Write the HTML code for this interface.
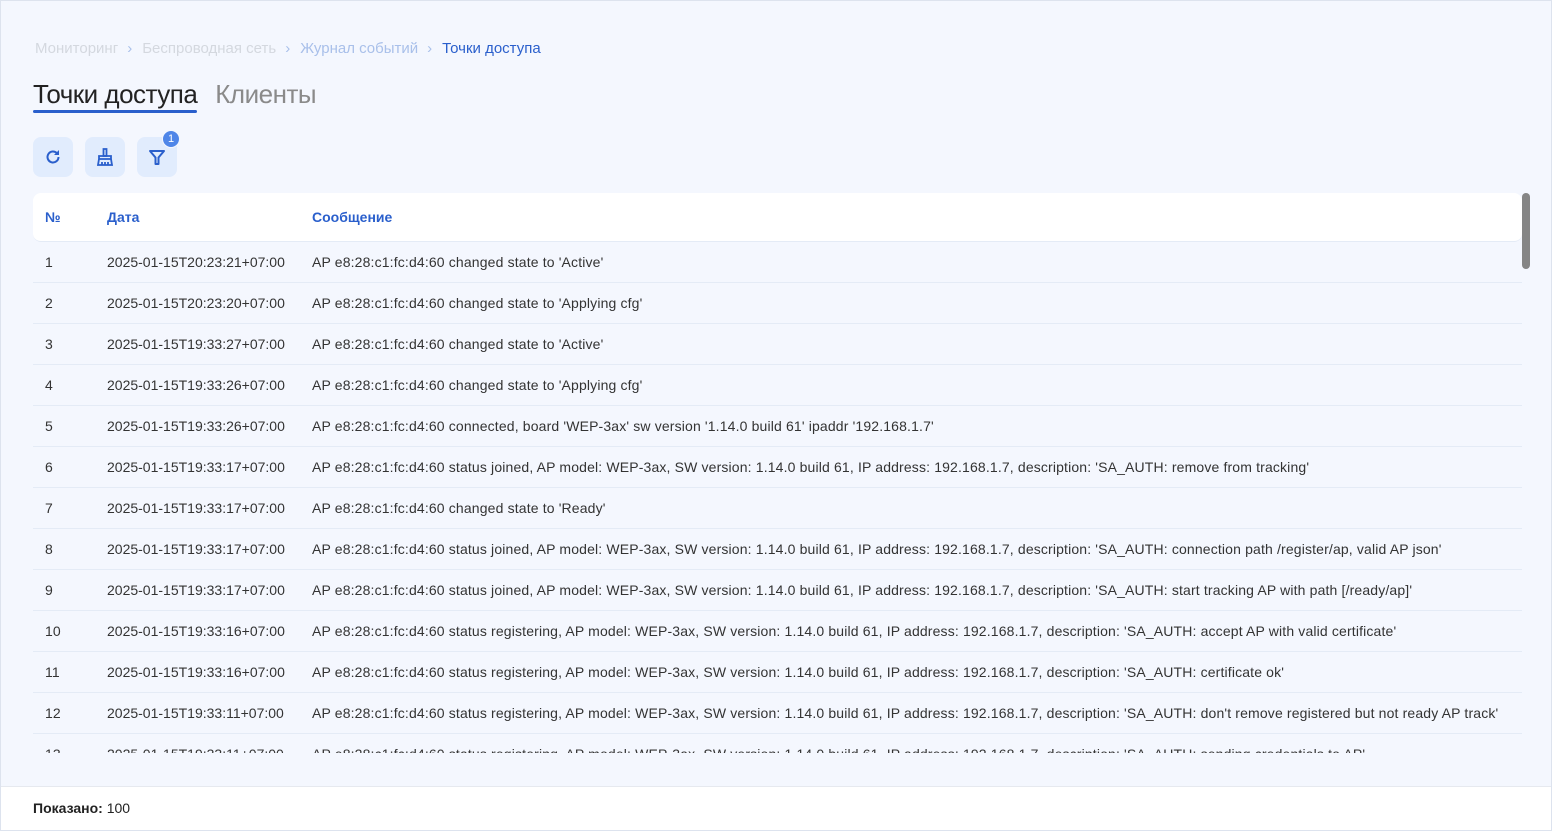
<!DOCTYPE html>
<html><head><meta charset="utf-8"><style>
*{margin:0;padding:0;box-sizing:border-box}
body{width:1552px;height:831px;background:#f4f7fe;font-family:"Liberation Sans",sans-serif;position:relative;overflow:hidden;color:#222}
.frame{position:absolute;left:0;top:0;width:1552px;height:831px;border:1px solid #dde3ee;pointer-events:none}
.bc{position:absolute;left:35px;top:40px;font-size:15px;color:#d4d8df;white-space:nowrap}
.bc span{margin-right:9px}
.bc .s{color:#a9c0ea;margin:0 10px 0 0}
.tabs{position:absolute;left:33px;top:79px;font-size:26px;white-space:nowrap;letter-spacing:-0.5px}
.t1{color:#222;display:inline-block;position:relative;margin-right:18px}
.t1:after{content:"";position:absolute;left:0;right:0;top:31px;height:3px;background:#2a5fcc;border-radius:2px}
.t2{color:#8a8a8a;display:inline-block}
.btn{position:absolute;top:137px;width:40px;height:40px;background:#e1ecfd;border-radius:8px;display:flex;align-items:center;justify-content:center}
.badge{position:absolute;left:162px;top:130px;width:18px;height:18px;border-radius:9px;background:#4f86e8;color:#fff;font-size:11px;text-align:center;line-height:16px;border:1px solid #f4f7fe}
.tbl{position:absolute;left:33px;top:193px;width:1489px;height:560px;overflow:hidden}
.hd{height:49px;background:#fff;border-radius:8px;border-bottom:1px solid #e4ebf6;position:relative;font-size:14px;color:#2a5fcc;font-weight:bold}
.row{height:41px;border-bottom:1px solid #e4ebf6;position:relative;font-size:14px;color:#333;white-space:nowrap;letter-spacing:0.15px}
.c1,.c2,.c3{position:absolute;top:50%;transform:translateY(-50%)}
.c1{left:12px}.c2{left:74px;letter-spacing:0}.c3{left:279px}
.sb{position:absolute;left:1522px;top:193px;width:8px;height:76px;background:#858585;border-radius:4px}
.ft{position:absolute;left:0;top:786px;width:1552px;height:45px;background:#fff;border-top:1px solid #e6e9ef;font-size:14px;padding:13px 33px}
</style></head><body>
<div class="bc"><span>Мониторинг</span><span class="s">›</span><span>Беспроводная сеть</span><span class="s">›</span><span style="color:#a9c0ea">Журнал событий</span><span class="s">›</span><span style="color:#2a5fcc">Точки доступа</span></div>
<div class="tabs"><span class="t1">Точки доступа</span><span class="t2">Клиенты</span></div>
<div class="btn" style="left:33px"><svg width="18" height="18" viewBox="0 0 18 18"><path d="M14.5 9a5.5 5.5 0 1 1-1.6-3.9" fill="none" stroke="#2a5fcc" stroke-width="2"/><path d="M15 2v5h-5z" fill="#2a5fcc"/></svg></div>
<div class="btn" style="left:85px"><svg width="20" height="20" viewBox="0 0 20 20" fill="none" stroke="#2a5fcc" stroke-width="1.8"><path d="M8.5 2h3v7h-3z"/><path d="M4 9h12v3H4z"/><path d="M4 12l-1 6h14l-1-6M7 15v3M10 15v3M13 15v3"/></svg></div>
<div class="btn" style="left:137px"><svg width="18" height="18" viewBox="0 0 18 18"><path d="M2 3h14l-5.5 6.5V16h-3V9.5z" fill="none" stroke="#2a5fcc" stroke-width="2" stroke-linejoin="round"/></svg></div>
<div class="badge">1</div>
<div class="tbl">
<div class="hd"><span class="c1">№</span><span class="c2">Дата</span><span class="c3">Сообщение</span></div>
<div class="row"><span class="c1">1</span><span class="c2">2025-01-15T20:23:21+07:00</span><span class="c3">AP e8:28:c1:fc:d4:60 changed state to 'Active'</span></div>
<div class="row"><span class="c1">2</span><span class="c2">2025-01-15T20:23:20+07:00</span><span class="c3">AP e8:28:c1:fc:d4:60 changed state to 'Applying cfg'</span></div>
<div class="row"><span class="c1">3</span><span class="c2">2025-01-15T19:33:27+07:00</span><span class="c3">AP e8:28:c1:fc:d4:60 changed state to 'Active'</span></div>
<div class="row"><span class="c1">4</span><span class="c2">2025-01-15T19:33:26+07:00</span><span class="c3">AP e8:28:c1:fc:d4:60 changed state to 'Applying cfg'</span></div>
<div class="row"><span class="c1">5</span><span class="c2">2025-01-15T19:33:26+07:00</span><span class="c3">AP e8:28:c1:fc:d4:60 connected, board 'WEP-3ax' sw version '1.14.0 build 61' ipaddr '192.168.1.7'</span></div>
<div class="row"><span class="c1">6</span><span class="c2">2025-01-15T19:33:17+07:00</span><span class="c3">AP e8:28:c1:fc:d4:60 status joined, AP model: WEP-3ax, SW version: 1.14.0 build 61, IP address: 192.168.1.7, description: 'SA_AUTH: remove from tracking'</span></div>
<div class="row"><span class="c1">7</span><span class="c2">2025-01-15T19:33:17+07:00</span><span class="c3">AP e8:28:c1:fc:d4:60 changed state to 'Ready'</span></div>
<div class="row"><span class="c1">8</span><span class="c2">2025-01-15T19:33:17+07:00</span><span class="c3">AP e8:28:c1:fc:d4:60 status joined, AP model: WEP-3ax, SW version: 1.14.0 build 61, IP address: 192.168.1.7, description: 'SA_AUTH: connection path /register/ap, valid AP json'</span></div>
<div class="row"><span class="c1">9</span><span class="c2">2025-01-15T19:33:17+07:00</span><span class="c3">AP e8:28:c1:fc:d4:60 status joined, AP model: WEP-3ax, SW version: 1.14.0 build 61, IP address: 192.168.1.7, description: 'SA_AUTH: start tracking AP with path [/ready/ap]'</span></div>
<div class="row"><span class="c1">10</span><span class="c2">2025-01-15T19:33:16+07:00</span><span class="c3">AP e8:28:c1:fc:d4:60 status registering, AP model: WEP-3ax, SW version: 1.14.0 build 61, IP address: 192.168.1.7, description: 'SA_AUTH: accept AP with valid certificate'</span></div>
<div class="row"><span class="c1">11</span><span class="c2">2025-01-15T19:33:16+07:00</span><span class="c3">AP e8:28:c1:fc:d4:60 status registering, AP model: WEP-3ax, SW version: 1.14.0 build 61, IP address: 192.168.1.7, description: 'SA_AUTH: certificate ok'</span></div>
<div class="row"><span class="c1">12</span><span class="c2">2025-01-15T19:33:11+07:00</span><span class="c3">AP e8:28:c1:fc:d4:60 status registering, AP model: WEP-3ax, SW version: 1.14.0 build 61, IP address: 192.168.1.7, description: 'SA_AUTH: don't remove registered but not ready AP track'</span></div>
<div class="row"><span class="c1">13</span><span class="c2">2025-01-15T19:33:11+07:00</span><span class="c3">AP e8:28:c1:fc:d4:60 status registering, AP model: WEP-3ax, SW version: 1.14.0 build 61, IP address: 192.168.1.7, description: 'SA_AUTH: sending credentials to AP'</span></div>
</div>
<div class="sb"></div>
<div class="ft"><b>Показано:</b> 100</div>
<div class="frame"></div>
</body></html>
